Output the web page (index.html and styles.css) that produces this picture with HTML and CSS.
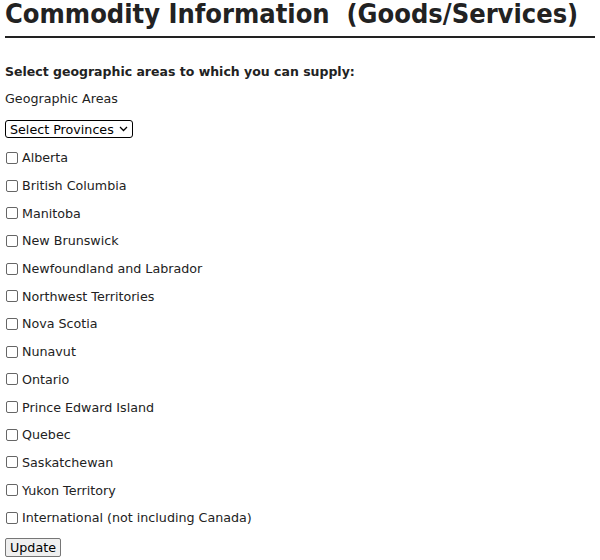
FILE: index.html
```html
<!DOCTYPE html>
<html>
<head>
<meta charset="utf-8">
<link rel="stylesheet" href="styles.css">
</head>
<body>
<div class="page">
  <h1 class="title">Commodity Information&nbsp; (Goods/Services)</h1>
  <form class="form">
    <p class="lead">Select geographic areas to which you can supply:</p>
    <p class="label">Geographic Areas</p>
    <div class="selrow">
      <label class="sel">Select Provinces
        <svg class="chev" width="9" height="6" viewBox="0 0 9 6"><path d="M1 1 L4.5 4.5 L8 1" fill="none" stroke="#000" stroke-width="1.3"/></svg>
      </label>
    </div>
    <ul class="list">
      <li><span class="cb"></span>Alberta</li>
      <li><span class="cb"></span>British Columbia</li>
      <li><span class="cb"></span>Manitoba</li>
      <li><span class="cb"></span>New Brunswick</li>
      <li><span class="cb"></span>Newfoundland and Labrador</li>
      <li><span class="cb"></span>Northwest Territories</li>
      <li><span class="cb"></span>Nova Scotia</li>
      <li><span class="cb"></span>Nunavut</li>
      <li><span class="cb"></span>Ontario</li>
      <li><span class="cb"></span>Prince Edward Island</li>
      <li><span class="cb"></span>Quebec</li>
      <li><span class="cb"></span>Saskatchewan</li>
      <li><span class="cb"></span>Yukon Territory</li>
      <li><span class="cb"></span>International (not including Canada)</li>
    </ul>
    <div class="btnrow"><span class="btn">Update</span></div>
  </form>
</div>
</body>
</html>
```
FILE: styles.css
```css
html, body { margin: 0; padding: 0; background: #fff; }
body { font-family: "DejaVu Sans", Verdana, sans-serif; color: #222; font-size: 12.7px; }
.page { padding: 0 5px; }
.title {
  margin: 0;
  font-family: "DejaVu Sans Condensed", "DejaVu Sans", sans-serif;
  font-size: 27px;
  font-weight: bold;
  line-height: 27px;
  color: #222;
  border-bottom: 2px solid #222;
  padding-bottom: 9px;
  white-space: nowrap;
}
.form { margin: 0; }
.lead { margin: 26px 0 0; font-weight: bold; font-size: 12.5px; line-height: 15px; }
.label { margin: 12px 0 0; line-height: 15px; }
.selrow { margin-top: 14px; display: flex; }
.sel {
  display: inline-flex; align-items: center; gap: 5px;
  border: 1px solid #000; border-radius: 3px;
  height: 16px; padding: 0 4px;
  color: #000;
}
.list { list-style: none; margin: 6px 0 0; padding: 0; }
.list li { display: flex; align-items: center; height: 27.7px; line-height: 15px; }
.cb {
  width: 10px; height: 10px; border: 1px solid #666; border-radius: 2px;
  margin: 0 4px 0 1px; background: #fff; flex: none;
}
.btnrow { margin-top: 6px; display: flex; }
.btn {
  display: inline-block; border: 1px solid #767676; border-radius: 2px;
  background: #efefef; padding: 1px 4px; color: #000; line-height: 15px;
}
```
